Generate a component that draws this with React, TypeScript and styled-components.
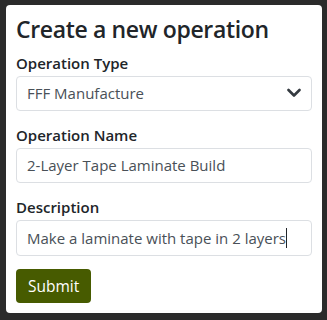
import React from 'react';
import styled, { createGlobalStyle } from 'styled-components';

const GlobalStyle = createGlobalStyle`
  html, body {
    margin: 0;
    padding: 0;
    background: #2b2b2b;
  }
  * {
    box-sizing: border-box;
  }
`;

const Page = styled.div`
  width: 327px;
  height: 320px;
  padding: 5px 5px 0 6px;
  font-family: "Open Sans", "Noto Sans", sans-serif;
`;

const Card = styled.form`
  background: #fff;
  border-radius: 4px;
  height: 308px;
  padding: 11px 10px 10px 10px;
  display: flex;
  flex-direction: column;
`;

const Title = styled.h1`
  margin: 0 0 7px 0;
  font-size: 23px;
  font-weight: 600;
  line-height: 1.2;
  color: #212529;
  letter-spacing: -0.35px;
`;

const Group = styled.div<{ $last?: boolean }>`
  display: flex;
  flex-direction: column;
  margin-bottom: ${p => (p.$last ? '13px' : '12px')};
`;

const Label = styled.label`
  font-size: 15px;
  font-weight: 600;
  line-height: 24px;
  color: #212529;
  margin-bottom: 1px;
`;

const fieldStyles = `
  width: 100%;
  height: 35px;
  padding: 0 10px;
  font-family: "Open Sans", "Noto Sans", sans-serif;
  font-size: 15px;
  color: #495057;
  background: #fff;
  border: 1px solid #dcdfe3;
  border-radius: 4px;
  outline: none;
`;

const SelectWrap = styled.div`
  position: relative;
`;

const Select = styled.select`
  ${fieldStyles}
  appearance: none;
`;

const Chevron = styled.svg`
  position: absolute;
  right: 11px;
  top: 12px;
  width: 14px;
  height: 10px;
  pointer-events: none;
`;

const Input = styled.input`
  ${fieldStyles}
`;

const FakeInput = styled.div`
  ${fieldStyles}
  height: 36px;
  display: flex;
  align-items: center;
  white-space: nowrap;
`;

const Caret = styled.span`
  display: inline-block;
  width: 1px;
  height: 20px;
  background: #212529;
`;

const SubmitButton = styled.button`
  align-self: flex-start;
  height: 35px;
  padding: 0 12px;
  font-family: "Open Sans", "Noto Sans", sans-serif;
  font-size: 15.5px;
  color: #fff;
  background: #475b00;
  border: none;
  border-radius: 4px;
`;

export default function App() {
  return (
    <>
      <GlobalStyle />
      <Page>
        <Card onSubmit={e => e.preventDefault()}>
          <Title>Create a new operation</Title>
          <Group>
            <Label>Operation Type</Label>
            <SelectWrap>
              <Select defaultValue="fff">
                <option value="fff">FFF Manufacture</option>
              </Select>
              <Chevron viewBox="0 0 14 10">
                <path d="M1.5 2 L7 7.5 L12.5 2" fill="none" stroke="#343a40" strokeWidth="2.6" strokeLinecap="round" strokeLinejoin="round" />
              </Chevron>
            </SelectWrap>
          </Group>
          <Group>
            <Label>Operation Name</Label>
            <Input readOnly defaultValue="2-Layer Tape Laminate Build" />
          </Group>
          <Group $last>
            <Label>Description</Label>
            <FakeInput>
              Make a laminate with tape in 2 layers
              <Caret />
            </FakeInput>
          </Group>
          <SubmitButton type="submit">Submit</SubmitButton>
        </Card>
      </Page>
    </>
  );
}
